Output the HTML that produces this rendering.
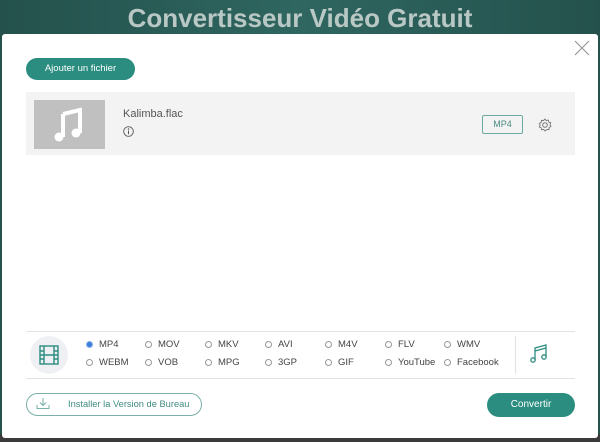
<!DOCTYPE html>
<html><head><style>
*{margin:0;padding:0;box-sizing:border-box}
body{width:600px;height:442px;overflow:hidden;background:#2a5a55;font-family:"Liberation Sans",sans-serif;position:relative}
.bg{position:absolute;left:0;top:0;width:600px;height:442px;background:linear-gradient(90deg,#24514c,#2f6660 50%,#24514c)}
.bot{position:absolute;left:0;top:434px;width:600px;height:8px;background:#3a3a3a}
.title{position:absolute;top:3px;left:0;width:600px;text-align:center;color:#b9c8c5;font-size:26px;font-weight:bold}
.modal{position:absolute;left:2px;top:34px;width:596px;height:404px;background:#fff;border-radius:3px}
.close{position:absolute;left:574px;top:40px}
.add{position:absolute;left:26px;top:58px;width:109px;height:22px;border-radius:11px;background:#2b8d80;color:#fff;font-size:9.5px;line-height:22px;text-align:center}
.row{position:absolute;left:26px;top:92px;width:549px;height:63px;background:#f3f3f3}
.thumb{position:absolute;left:34px;top:100px;width:71px;height:49px;background:#c0c0c0}
.fname{position:absolute;left:123px;top:108px;font-size:11px;color:#555}
.mp4{position:absolute;left:482px;top:115px;width:41px;height:19px;border:1px solid #6aaaa0;border-radius:2px;font-size:9px;color:#4a8a80;text-align:center;line-height:17px}
.line{position:absolute;left:26px;width:549px;height:1px;background:#e2e2e2}
.fmt{position:absolute;font-size:9.5px;color:#444;display:flex;align-items:center}
.fmt i{display:inline-block;width:7px;height:7px;border:1px solid #999;border-radius:50%;margin-right:6px}
.fmt i.on{background:#3b7fd9;border-color:#8bb0e8}
.filmc{position:absolute;left:30px;top:336px;width:38px;height:38px;border-radius:50%;background:#eef0f4}
.inst{position:absolute;left:26px;top:393px;width:176px;height:23px;border:1px solid #7ab0a8;border-radius:12px;font-size:9.3px;color:#3f8a80;line-height:21px;padding-left:41px;white-space:nowrap}
.conv{position:absolute;left:487px;top:393px;width:88px;height:24px;border-radius:12px;background:#2b8d80;color:#fff;font-size:10px;line-height:24px;text-align:center}
</style></head><body>
<div class="bg"></div><div class="bot"></div>
<div class="title">Convertisseur Vidéo Gratuit</div>
<div class="modal"></div>
<svg class="close" width="16" height="16" viewBox="0 0 16 16"><path d="M1 1L15 15M15 1L1 15" stroke="#999" stroke-width="1.2"/></svg>
<div class="add">Ajouter un fichier</div>
<div class="row"></div>
<div class="thumb"><svg width="71" height="49" viewBox="0 0 71 49"><path d="M29 14L46 10V33" stroke="#fff" stroke-width="4" fill="none"/><path d="M29 14V37" stroke="#fff" stroke-width="4"/><circle cx="25" cy="37" r="4.5" fill="#fff"/><circle cx="42" cy="33" r="4.5" fill="#fff"/></svg></div>
<div class="fname">Kalimba.flac</div>
<svg style="position:absolute;left:123px;top:126px" width="11" height="11" viewBox="0 0 11 11"><circle cx="5.5" cy="5.5" r="4.8" fill="none" stroke="#555" stroke-width="0.9"/><path d="M5.5 4.5V8.3" stroke="#555" stroke-width="1"/><circle cx="5.5" cy="3" r="0.7" fill="#555"/></svg>
<div class="mp4">MP4</div>
<svg style="position:absolute;left:538px;top:118px" width="14" height="14" viewBox="0 0 14 14"><circle cx="7" cy="7" r="2.3" fill="none" stroke="#777" stroke-width="1"/><path d="M7 1L8.3 2.6L10.3 2.1L10.8 4.1L12.8 4.8L12 6.7L13 8.5L11.1 9.4L11 11.5L8.9 11.4L7 13L5.7 11.4L3.6 11.8L3.3 9.8L1.3 9L2.2 7.1L1.2 5.3L3.2 4.5L3.4 2.4L5.4 2.6Z" fill="none" stroke="#777" stroke-width="0.9"/></svg>
<div class="line" style="top:331px"></div>
<div class="line" style="top:378px"></div>
<div class="filmc"><svg style="margin:9px 0 0 9px" width="20" height="20" viewBox="0 0 20 20" fill="none" stroke="#2b8d80" stroke-width="1.4"><rect x="1" y="1" width="18" height="18"/><path d="M5 1V19M15 1V19M1 6H5M1 10H5M1 14H5M15 6H19M15 10H19M15 14H19M5 10H15"/></svg></div>
<div class="fmt" style="left:86px;top:339px"><i class="on"></i>MP4</div>
<div class="fmt" style="left:145px;top:339px"><i></i>MOV</div>
<div class="fmt" style="left:205px;top:339px"><i></i>MKV</div>
<div class="fmt" style="left:265px;top:339px"><i></i>AVI</div>
<div class="fmt" style="left:325px;top:339px"><i></i>M4V</div>
<div class="fmt" style="left:385px;top:339px"><i></i>FLV</div>
<div class="fmt" style="left:444px;top:339px"><i></i>WMV</div>
<div class="fmt" style="left:86px;top:357px"><i></i>WEBM</div>
<div class="fmt" style="left:145px;top:357px"><i></i>VOB</div>
<div class="fmt" style="left:205px;top:357px"><i></i>MPG</div>
<div class="fmt" style="left:265px;top:357px"><i></i>3GP</div>
<div class="fmt" style="left:325px;top:357px"><i></i>GIF</div>
<div class="fmt" style="left:385px;top:357px"><i></i>YouTube</div>
<div class="fmt" style="left:444px;top:357px"><i></i>Facebook</div>
<div style="position:absolute;left:515px;top:336px;width:1px;height:38px;background:#e2e2e2"></div>
<svg style="position:absolute;left:529px;top:344px" width="20" height="20" viewBox="0 0 20 20" fill="none" stroke="#2b8d80" stroke-width="1.3"><path d="M6 16V4L17 1V13M6 7L17 4"/><circle cx="4" cy="16" r="2.2"/><circle cx="15" cy="13" r="2.2"/></svg>
<div class="inst">Installer la Version de Bureau</div>
<svg style="position:absolute;left:36px;top:397px" width="14" height="13" viewBox="0 0 14 13" fill="none" stroke="#7ab0a8" stroke-width="1"><path d="M7 1V8M4 5.5L7 8.5L10 5.5M1 8V11.5H13V8"/></svg>
<div class="conv">Convertir</div>
</body></html>
